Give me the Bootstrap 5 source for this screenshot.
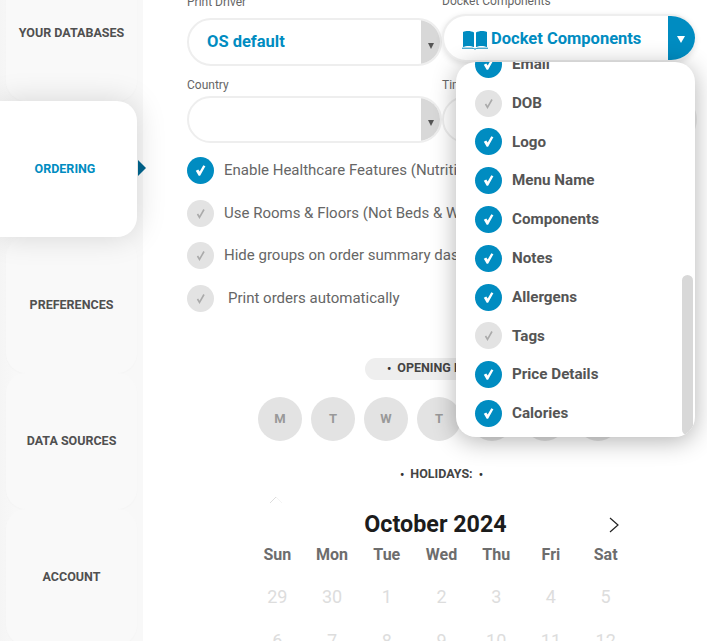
<!DOCTYPE html>
<html lang="en">

<head>
    <meta charset="UTF-8">
    <meta name="viewport" content="width=device-width, initial-scale=1.0">
    <title>Ordering</title>
    <link rel="stylesheet" href="https://cdn.jsdelivr.net/npm/bootstrap@5.3.2/dist/css/bootstrap.min.css">
    <style>
        html, body { height: 100%; overflow: hidden; }
        body { font-family: Roboto, "Liberation Sans", sans-serif; background: #fff; color: #555; }
        .shell { height: 641px; overflow: hidden; }

        .side { width: 143px; background: linear-gradient(90deg, #f5f5f5, #f8f8f8 14px); flex: none; margin-top: -35px; }
        .side-item { width: 131px; height: 136px; margin-left: 6px; border-radius: 20px; background: #f9f9f9; font-size: 12.5px; font-weight: 700; color: #505050; text-transform: uppercase; box-shadow: 0 1px 2px rgba(0,0,0,.02); }
        .side-item.current { width: 137px; margin-left: 0; border-radius: 0 20px 20px 0; background: #fff; color: #008cc1; box-shadow: 0 0 30px rgba(0,0,0,.15); position: relative; z-index: 1; padding-right: 7px; }
        .side-item.current::after { content: ""; position: absolute; left: 138px; top: 59px; border-left: 8px solid #005f86; border-top: 8px solid transparent; border-bottom: 8px solid transparent; }

        .main-col { flex: 1; position: relative; min-width: 0; margin-top: -8px; }
        .fields { padding-left: 44px; width: 564px; }
        .field-col { width: 255px; }
        .field-col.first { margin-top: 3px; }
        .field-col.second { width: 253px; margin-top: 2px; }
        .field-col.lower { margin-top: 12px; }
        .field-lbl { font-size: 12px; line-height: 14px; color: #666; margin-bottom: 4px; }
        .first .field-lbl { margin-bottom: 9px; }
        .second .field-lbl { margin-bottom: 6px; }
        .pick { height: 48px; border: 2px solid #eee; border-radius: 24px; width: 255px; overflow: hidden; background: #fff; }
        .lower .pick { height: 47px; }
        .pick-text { font-size: 16.5px; font-weight: 700; color: #008cc1; padding-left: 18px; }
        .pick-arrow { width: 19px; background: #d8d8d8; padding-top: 7px; }
        .tri-down { width: 0; height: 0; border-left: 3.500px solid transparent; border-right: 3.500px solid transparent; border-top: 6px solid #555; }
        .dd-arrow .tri-down { border-left-width: 4px; border-right-width: 4px; border-top: 7px solid #fff; }
        .dd-btn { height: 48px; width: 253px; border-radius: 24px; background: #fff; border: 2px solid #eee; border-right: 0; overflow: hidden; box-shadow: 0 2px 6px rgba(0,0,0,.12); }
        .dd-label { font-size: 16.5px; font-weight: 700; color: #008cc1; padding: 3px 0 0 18px; gap: 3px; }
        .dd-arrow { width: 27px; background: #008cc1; padding: 2px 2px 0 0; }

        .chk-row { font-size: 15px; color: #666; gap: 10px; height: 27px; white-space: nowrap; }
        .chk { width: 27px; height: 27px; border-radius: 50%; background: #e3e3e3; flex: none; }
        .chk.on { background: #008cc1; }
        .chk-list { margin-top: 14px; row-gap: 15.600px; padding-left: 44px; }

        .pill-wrap { margin-top: 46px; padding-left: 222px; width: 564px; }
        .pill-lbl { background: #eee; border-radius: 11px; height: 22px; width: 160px; font-size: 12.5px; font-weight: 700; color: #444; padding-left: 22px; }
        .dot-sep { font-size: 12px; color: #333; margin: 0 6px 0 0; }
        .dot-sep.end { margin: 0 0 0 6px; }
        .days { gap: 9px; margin: 17px 0 0 115px; }
        .day-btn { width: 44px; height: 44px; border-radius: 50%; background: #e3e3e3; color: #999; font-size: 13px; font-weight: 700; flex: none; }
        .hol-lbl { margin: 25px 0 0 257px; font-size: 12.5px; font-weight: 700; color: #444; height: 18px; }

        .cal { margin: 19px 0 0 107px; width: 383px; }
        .cal-head { height: 44px; position: relative; font-size: 23.300px; font-weight: 700; color: #1c1c1c; padding-right: 12px; }
        .cal-week { display: grid; grid-template-columns: repeat(7, 1fr); text-align: center; }
        .cal-days { font-size: 16px; font-weight: 700; color: #6d6d6d; height: 22px; line-height: 22px; margin-top: -3px; }
        .cal-dates { font-size: 18px; color: #ddd; margin-top: 20px; line-height: 22px; }
        .cal-dates + .cal-dates { margin-top: 22px; }
        .cal-prev { position: absolute; left: 19px; top: -7px; }
        .cal-next { position: absolute; right: 13px; top: 14px; }

        .dd-menu { position: absolute; left: 313px; top: 70px; width: 239px; height: 375px; background: #fff; border-radius: 20px; box-shadow: 0 4px 24px rgba(0,0,0,.3); overflow: hidden; z-index: 5; }
        .dd-items { margin-top: -17px; padding-left: 19px; }
        .dd-item { height: 38.800px; gap: 10px; font-size: 15.200px; font-weight: 700; color: #555; }
        .dd-thumb { position: absolute; right: 2px; top: 213px; width: 11px; height: 160px; background: #d8d8d8; border-radius: 6px; }
    </style>
</head>

<body>
    <svg width="0" height="0" class="position-absolute">
        <symbol id="tick-on" viewBox="0 0 13 13"><path d="M1.800 6.800L4.300 5.400 5.700 7.600 9.300 1.200 11.400 2.300 6.100 11.800H4.700z" fill="#fff"/></symbol>
        <symbol id="tick-off" viewBox="0 0 13 13"><path d="M3.500 7l2 3.500 4.500-8" fill="none" stroke="#aaa" stroke-width="1.600"/></symbol>
    </svg>

    <div class="shell d-flex">
        <div class="side">
            <div class="side-item d-flex align-items-center justify-content-center">Your Databases</div>
            <div class="side-item current d-flex align-items-center justify-content-center">Ordering</div>
            <div class="side-item d-flex align-items-center justify-content-center">Preferences</div>
            <div class="side-item d-flex align-items-center justify-content-center">Data Sources</div>
            <div class="side-item d-flex align-items-center justify-content-center">Account</div>
        </div>

        <div class="main-col">
            <div class="fields d-flex flex-wrap">
                <div class="field-col first">
                    <div class="field-lbl">Print Driver</div>
                    <div class="pick d-flex justify-content-between">
                        <div class="pick-text d-flex align-items-center">OS default</div>
                        <div class="pick-arrow d-flex align-items-center justify-content-center"><span class="tri-down"></span></div>
                    </div>
                </div>
                <div class="field-col second">
                    <div class="field-lbl">Docket Components</div>
                    <div class="dd-btn d-flex justify-content-between">
                        <div class="dd-label d-flex align-items-center">
                            <svg width="26" height="20" viewBox="0 0 26 20" fill="#008cc1"><path d="M1 2c3-1.500 8-1.500 11 .5V17c-3-1.500-8-1.500-11 0z"/><path d="M25 2c-3-1.500-8-1.500-11 .5V17c3-1.500 8-1.500 11 0z"/><path d="M0 18.200h10c1 0 2 .3 3 1 1-.7 2-1 3-1h10" fill="none" stroke="#008cc1" stroke-width="1"/></svg>
                            Docket Components
                        </div>
                        <div class="dd-arrow d-flex align-items-center justify-content-center"><span class="tri-down"></span></div>
                    </div>
                </div>
                <div class="field-col lower">
                    <div class="field-lbl">Country</div>
                    <div class="pick d-flex justify-content-end">
                        <div class="pick-arrow d-flex align-items-center justify-content-center"><span class="tri-down"></span></div>
                    </div>
                </div>
                <div class="field-col lower">
                    <div class="field-lbl">Timezone</div>
                    <div class="pick"></div>
                </div>
            </div>

            <div class="chk-list d-flex flex-column">
                <div class="chk-row d-flex align-items-center"><span class="chk on d-flex align-items-center justify-content-center"><svg width="13" height="13"><use href="#tick-on"/></svg></span>Enable Healthcare Features (Nutrition)</div>
                <div class="chk-row d-flex align-items-center"><span class="chk d-flex align-items-center justify-content-center"><svg width="13" height="13"><use href="#tick-off"/></svg></span>Use Rooms &amp; Floors (Not Beds &amp; Wards)</div>
                <div class="chk-row d-flex align-items-center"><span class="chk d-flex align-items-center justify-content-center"><svg width="13" height="13"><use href="#tick-off"/></svg></span>Hide groups on order summary dashboard</div>
                <div class="chk-row d-flex align-items-center"><span class="chk d-flex align-items-center justify-content-center"><svg width="13" height="13"><use href="#tick-off"/></svg></span><span class="ms-1">Print orders automatically</span></div>
            </div>

            <div class="pill-wrap">
                <div class="pill-lbl d-flex align-items-center"><span class="dot-sep">&#8226;</span>OPENING HOURS:<span class="dot-sep end">&#8226;</span></div>
            </div>
            <div class="days d-flex">
                <div class="day-btn d-flex align-items-center justify-content-center">M</div>
                <div class="day-btn d-flex align-items-center justify-content-center">T</div>
                <div class="day-btn d-flex align-items-center justify-content-center">W</div>
                <div class="day-btn d-flex align-items-center justify-content-center">T</div>
                <div class="day-btn d-flex align-items-center justify-content-center">F</div>
                <div class="day-btn d-flex align-items-center justify-content-center">S</div>
                <div class="day-btn d-flex align-items-center justify-content-center">S</div>
            </div>
            <div class="hol-lbl d-flex align-items-center"><span class="dot-sep">&#8226;</span>HOLIDAYS:<span class="dot-sep end">&#8226;</span></div>

            <div class="cal">
                <div class="cal-head d-flex align-items-center justify-content-center">
                    <svg class="cal-prev" width="14" height="8" viewBox="0 0 14 8"><path d="M1 7L7 1" fill="none" stroke="#ddd"/><path d="M7 1l6 6" fill="none" stroke="#f4f4f4"/></svg>
                    October 2024
                    <svg class="cal-next" width="12" height="16" viewBox="0 0 12 16"><path d="M2 1l8 7-8 7" fill="none" stroke="#222" stroke-width="1.200"/></svg>
                </div>
                <div class="cal-week cal-days"><div>Sun</div><div>Mon</div><div>Tue</div><div>Wed</div><div>Thu</div><div>Fri</div><div>Sat</div></div>
                <div class="cal-week cal-dates"><div>29</div><div>30</div><div>1</div><div>2</div><div>3</div><div>4</div><div>5</div></div>
                <div class="cal-week cal-dates"><div>6</div><div>7</div><div>8</div><div>9</div><div>10</div><div>11</div><div>12</div></div>
            </div>

            <div class="dd-menu">
                <div class="dd-items">
                    <div class="dd-item d-flex align-items-center"><span class="chk on d-flex align-items-center justify-content-center"><svg width="13" height="13"><use href="#tick-on"/></svg></span>Email</div>
                    <div class="dd-item d-flex align-items-center"><span class="chk d-flex align-items-center justify-content-center"><svg width="13" height="13"><use href="#tick-off"/></svg></span>DOB</div>
                    <div class="dd-item d-flex align-items-center"><span class="chk on d-flex align-items-center justify-content-center"><svg width="13" height="13"><use href="#tick-on"/></svg></span>Logo</div>
                    <div class="dd-item d-flex align-items-center"><span class="chk on d-flex align-items-center justify-content-center"><svg width="13" height="13"><use href="#tick-on"/></svg></span>Menu Name</div>
                    <div class="dd-item d-flex align-items-center"><span class="chk on d-flex align-items-center justify-content-center"><svg width="13" height="13"><use href="#tick-on"/></svg></span>Components</div>
                    <div class="dd-item d-flex align-items-center"><span class="chk on d-flex align-items-center justify-content-center"><svg width="13" height="13"><use href="#tick-on"/></svg></span>Notes</div>
                    <div class="dd-item d-flex align-items-center"><span class="chk on d-flex align-items-center justify-content-center"><svg width="13" height="13"><use href="#tick-on"/></svg></span>Allergens</div>
                    <div class="dd-item d-flex align-items-center"><span class="chk d-flex align-items-center justify-content-center"><svg width="13" height="13"><use href="#tick-off"/></svg></span>Tags</div>
                    <div class="dd-item d-flex align-items-center"><span class="chk on d-flex align-items-center justify-content-center"><svg width="13" height="13"><use href="#tick-on"/></svg></span>Price Details</div>
                    <div class="dd-item d-flex align-items-center"><span class="chk on d-flex align-items-center justify-content-center"><svg width="13" height="13"><use href="#tick-on"/></svg></span>Calories</div>
                </div>
                <div class="dd-thumb"></div>
            </div>
        </div>
    </div>

    <script src="https://cdn.jsdelivr.net/npm/bootstrap@5.3.2/dist/js/bootstrap.bundle.min.js"></script>
</body>

</html>
